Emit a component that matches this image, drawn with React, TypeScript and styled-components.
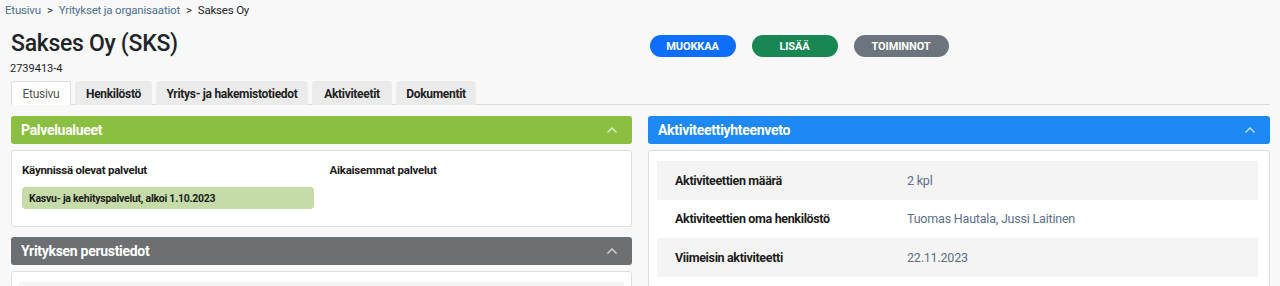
import React from "react";
import styled, { createGlobalStyle } from "styled-components";

const GlobalStyle = createGlobalStyle`
  body {
    margin: 0;
    background: #f8f8f8;
    font-family: Roboto, "Liberation Sans", sans-serif;
    color: #212529;
  }
`;

const PageSC = styled.div`
  padding: 0 10px 0 11px;
`;

const BreadcrumbSC = styled.nav`
  display: flex;
  align-items: center;
  gap: 6px;
  height: 19px;
  margin-left: -6px;
  font-size: 11.5px;
  letter-spacing: -0.2px;
  color: #212529;
`;

const CrumbLinkSC = styled.a`
  color: #4f6f8f;
  text-decoration: none;
`;

const HeaderRowSC = styled.div`
  display: grid;
  grid-template-columns: 1fr 1fr;
  column-gap: 16px;
  padding-top: 11px;
`;

const TitleSC = styled.h1`
  margin: 0;
  font-size: 23px;
  font-weight: 500;
  line-height: 28px;
  letter-spacing: -0.3px;
`;

const BusinessIdSC = styled.div`
  font-size: 11px;
  line-height: 14px;
  margin-top: 4px;
  margin-left: -1px;
`;

const ButtonRowSC = styled.div`
  display: flex;
  gap: 16px;
  padding-top: 5px;
  margin-left: 1px;
`;

const PillButtonSC = styled.button<{ $bg: string; $width: number }>`
  width: ${(p) => p.$width}px;
  height: 22px;
  border: none;
  border-radius: 11px;
  background: ${(p) => p.$bg};
  color: #fff;
  font-family: Roboto, sans-serif;
  font-size: 11px;
  font-weight: 700;
  letter-spacing: -0.1px;
  padding: 0;
`;

const TabsSC = styled.div`
  display: flex;
  gap: 4px;
  margin-top: 5px;
  border-bottom: 1px solid #dcdcdc;
`;

const TabSC = styled.div<{ $active?: boolean; $width: number }>`
  width: ${(p) => p.$width}px;
  height: 24px;
  box-sizing: border-box;
  display: flex;
  align-items: center;
  justify-content: center;
  font-size: 12px;
  font-weight: ${(p) => (p.$active ? 400 : 700)};
  color: ${(p) => (p.$active ? "#555" : "#222")};
  background: ${(p) => (p.$active ? "#fff" : "#ebebeb")};
  border: 1px solid ${(p) => (p.$active ? "#dcdcdc" : "transparent")};
  border-bottom: none;
  border-radius: 3px 3px 0 0;
  margin-bottom: -1px;
  letter-spacing: -0.3px;
`;

const ColumnsSC = styled.div`
  display: grid;
  grid-template-columns: 621px 622px;
  column-gap: 16px;
  margin-top: 11px;
  align-items: start;
`;

const ColumnSC = styled.div`
  display: flex;
  flex-direction: column;
  gap: 10px;
`;

const SectionSC = styled.section`
  display: flex;
  flex-direction: column;
  gap: 6px;
`;

const SectionHeaderSC = styled.div<{ $bg: string }>`
  height: 28px;
  border-radius: 3px;
  background: ${(p) => p.$bg};
  display: flex;
  align-items: center;
  justify-content: space-between;
  padding: 0 14px 0 10px;
  color: #fff;
  font-size: 14px;
  font-weight: 700;
  letter-spacing: -0.3px;
`;

const CardSC = styled.div<{ $pad: string }>`
  background: #fff;
  border: 1px solid #dedede;
  border-radius: 3px;
  padding: ${(p) => p.$pad};
`;

const ServicesGridSC = styled.div`
  display: grid;
  grid-template-columns: 1fr 1fr;
  column-gap: 16px;
`;

const SubTitleSC = styled.div`
  font-size: 11.5px;
  font-weight: 700;
  line-height: 16px;
  letter-spacing: -0.25px;
  color: #1c1c1c;
`;

const ServiceBadgeSC = styled.div`
  margin-top: 9px;
  height: 22px;
  border-radius: 4px;
  background: #c5dca8;
  display: flex;
  align-items: center;
  padding-left: 7px;
  font-size: 10.5px;
  font-weight: 700;
  letter-spacing: -0.25px;
  color: #1c1c1c;
`;

const InfoRowSC = styled.div<{ $striped?: boolean }>`
  display: grid;
  grid-template-columns: 232px 1fr;
  align-items: center;
  height: 38.5px;
  padding-left: 18px;
  background: ${(p) => (p.$striped ? "#f4f4f4" : "#fff")};
`;

const InfoLabelSC = styled.div`
  font-size: 12.5px;
  font-weight: 700;
  letter-spacing: -0.35px;
  color: #1c1c1c;
`;

const InfoValueSC = styled.div`
  font-size: 12.5px;
  letter-spacing: -0.2px;
  color: #5b6f86;
`;

const Chevron = () => (
  <svg width="12" height="8" viewBox="0 0 12 8" fill="none">
    <path d="M1.5 6.5 6 2l4.5 4.5" stroke="rgba(255,255,255,0.75)" strokeWidth="1.4" />
  </svg>
);

const activityRows = [
  { label: "Aktiviteettien määrä", value: "2 kpl" },
  { label: "Aktiviteettien oma henkilöstö", value: "Tuomas Hautala, Jussi Laitinen" },
  { label: "Viimeisin aktiviteetti", value: "22.11.2023" },
];

const tabs = [
  { name: "Etusivu", width: 60 },
  { name: "Henkilöstö", width: 77 },
  { name: "Yritys- ja hakemistotiedot", width: 152 },
  { name: "Aktiviteetit", width: 80 },
  { name: "Dokumentit", width: 80 },
];

export default function App() {
  return (
    <>
      <GlobalStyle />
      <PageSC>
        <BreadcrumbSC>
          <CrumbLinkSC href="#">Etusivu</CrumbLinkSC>
          <span>&gt;</span>
          <CrumbLinkSC href="#">Yritykset ja organisaatiot</CrumbLinkSC>
          <span>&gt;</span>
          <span>Sakses Oy</span>
        </BreadcrumbSC>
        <HeaderRowSC>
          <div>
            <TitleSC>Sakses Oy (SKS)</TitleSC>
            <BusinessIdSC>2739413-4</BusinessIdSC>
          </div>
          <ButtonRowSC>
            <PillButtonSC $bg="#0d6efd" $width={86}>MUOKKAA</PillButtonSC>
            <PillButtonSC $bg="#198754" $width={86}>LISÄÄ</PillButtonSC>
            <PillButtonSC $bg="#6c757d" $width={95}>TOIMINNOT</PillButtonSC>
          </ButtonRowSC>
        </HeaderRowSC>
        <TabsSC>
          {tabs.map((t, i) => (
            <TabSC key={t.name} $active={i === 0} $width={t.width}>
              {t.name}
            </TabSC>
          ))}
        </TabsSC>
        <ColumnsSC>
          <ColumnSC>
            <SectionSC>
              <SectionHeaderSC $bg="#8abf42">
                Palvelualueet
                <Chevron />
              </SectionHeaderSC>
              <CardSC $pad="11px 10px 17px 10px">
                <ServicesGridSC>
                  <div>
                    <SubTitleSC>Käynnissä olevat palvelut</SubTitleSC>
                    <ServiceBadgeSC>Kasvu- ja kehityspalvelut, alkoi 1.10.2023</ServiceBadgeSC>
                  </div>
                  <div>
                    <SubTitleSC>Aikaisemmat palvelut</SubTitleSC>
                  </div>
                </ServicesGridSC>
              </CardSC>
            </SectionSC>
            <SectionSC>
              <SectionHeaderSC $bg="#6c7073">
                Yrityksen perustiedot
                <Chevron />
              </SectionHeaderSC>
              <CardSC $pad="10px 7px">
                <InfoRowSC $striped />
              </CardSC>
            </SectionSC>
          </ColumnSC>
          <ColumnSC>
            <SectionSC>
              <SectionHeaderSC $bg="#1e88f3">
                Aktiviteettiyhteenveto
                <Chevron />
              </SectionHeaderSC>
              <CardSC $pad="10px 11px 10px 8px">
                {activityRows.map((r, i) => (
                  <InfoRowSC key={r.label} $striped={i % 2 === 0}>
                    <InfoLabelSC>{r.label}</InfoLabelSC>
                    <InfoValueSC>{r.value}</InfoValueSC>
                  </InfoRowSC>
                ))}
              </CardSC>
            </SectionSC>
          </ColumnSC>
        </ColumnsSC>
      </PageSC>
    </>
  );
}
